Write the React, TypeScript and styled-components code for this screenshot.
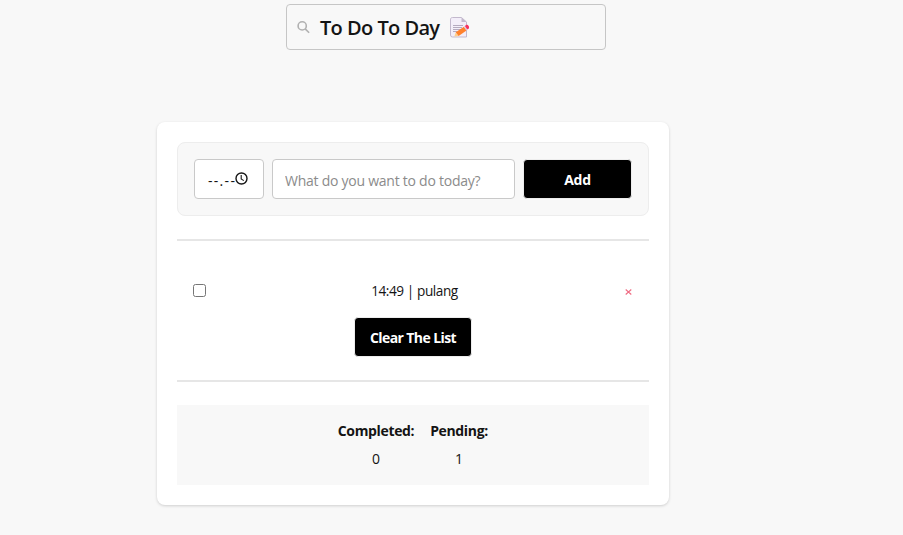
import React, { useState } from 'react';
import styled, { createGlobalStyle } from 'styled-components';

const GlobalStyle = createGlobalStyle`
  * { box-sizing: border-box; }
  body {
    margin: 0;
    background: #f8f8f8;
    color: #141414;
    font-family: "Open Sans", "Noto Sans", sans-serif;
    font-size: 14px;
    line-height: 20px;
    overflow: hidden;
  }
  button, input { font: inherit; }
`;

const Page = styled.main`
  height: 535px;
  padding-top: 4px;
`;

const Header = styled.header`
  display: flex;
  align-items: center;
  width: 320px;
  height: 46px;
  margin-left: 286px;
  padding-left: 10px;
  border: 1px solid #c6c6c6;
  border-radius: 4px;
`;

const Title = styled.h1`
  margin: 1px 0 0 10px;
  width: 130px;
  font-size: 20px;
  font-weight: 600;
  line-height: 28px;
  letter-spacing: -0.75px;
  word-spacing: 0.6px;
  white-space: nowrap;
`;

const Card = styled.section`
  width: 512px;
  height: 383px;
  margin: 72px 0 0 157px;
  padding: 20px;
  border-radius: 8px;
  background: #fff;
  box-shadow: 0 1px 3px rgba(0, 0, 0, 0.17);
`;

const Form = styled.form`
  display: flex;
  gap: 8px;
  height: 74px;
  padding: 16px;
  border: 1px solid #ededed;
  border-radius: 8px;
  background: #f8f8f8;
`;

const TimeField = styled.div`
  display: flex;
  align-items: center;
  width: 70px;
  height: 40px;
  padding: 2px 0 0 13px;
  border: 1px solid #c9c9c9;
  border-radius: 4px;
  background: #fff;
  letter-spacing: 1.3px;
  svg { margin: -3px 0 0; flex: none; }
`;

const TimeText = styled.span`
  width: 27px;
  padding-top: 2px;
  white-space: nowrap;
`;

const TaskInput = styled.input`
  width: 243px;
  height: 40px;
  padding: 2px 12px 0;
  border: 1px solid #c9c9c9;
  border-radius: 4px;
  background: #fff;
  outline: none;
  letter-spacing: -0.25px;
  &::placeholder { color: #8b8b8b; opacity: 1; }
`;

const Button = styled.button<{ $width: number; $tracking?: number }>`
  width: ${({ $width }) => $width}px;
  height: 40px;
  padding: 2px 0 0;
  border: 1px solid #ededed;
  border-radius: 4px;
  background: #000;
  color: #fff;
  font-weight: 700;
  letter-spacing: ${({ $tracking = 0 }) => $tracking}px;
  white-space: nowrap;
`;

const Divider = styled.hr`
  height: 2px;
  margin: 23px 0;
  border: 0;
  background: #e6e6e6;
`;

const List = styled.div`
  display: flex;
  flex-direction: column;
  align-items: center;
  height: 81px;
  margin-top: 35px;
`;

const Task = styled.div`
  display: flex;
  align-items: center;
  width: 100%;
  height: 30px;
  padding: 0 17px 0 16px;
`;

const Checkbox = styled.input`
  width: 13px;
  height: 13px;
  margin: 0 0 2px;
`;

const TaskText = styled.span`
  flex: 1;
  padding-right: 2px;
  text-align: center;
  font-size: 13.6px;
  letter-spacing: -0.42px;
`;

const Remove = styled.button`
  display: flex;
  padding: 1px 0 0;
  border: 0;
  background: none;
`;

const ClearRow = styled.div`
  margin-top: 11px;
`;

const Stats = styled.div`
  display: flex;
  justify-content: center;
  gap: 16px;
  height: 80px;
  padding-top: 16px;
  background: #f8f8f8;
`;

const Stat = styled.div<{ $width: number }>`
  display: flex;
  flex-direction: column;
  align-items: center;
  gap: 8px;
  width: ${({ $width }) => $width}px;
  white-space: nowrap;
  strong { font-weight: 700; letter-spacing: -0.35px; }
`;

function SearchIcon() {
  return (
    <svg width="13" height="13" viewBox="0 0 13 13" fill="none" stroke="#b1b1b1" strokeWidth="1.6">
      <circle cx="5.2" cy="4.9" r="4.1" /><path d="m8.2 7.9 3.9 3.9" />
    </svg>
  );
}

function NoteIcon() {
  return (
    <svg width="21" height="21" viewBox="0 0 21 21">
      <path d="M2.5.5h9l5 4.5v15h-14a2 2 0 0 1-2-2v-15a2 2 0 0 1 2-2.5z" fill="#f3eef9" stroke="#c3b9cd" />
      <path d="M11.5.5V5h5z" fill="#c3b9cd" />
      <path d="M3 8.5h10M3 10.5h9M3 12.5h8M3 14.5h4" stroke="#b5abc0" strokeWidth="1" />
      <path d="m4.3 19.5 1.4-4 2.8 3.5z" fill="#ffd08b" />
      <path d="m5.7 15.2 8.2-5.5 2.6 3.9L8.6 19z" fill="#ff822d" />
      <path d="m13.9 9.7 1-.7 2.7 3.9-1.1.7z" fill="#d7c8dc" />
      <path d="m14.9 9 1.2-1c1.5-.9 3.8 1.9 2.7 3.3l-1.3 1.2z" fill="#f8315f" />
    </svg>
  );
}

function ClockIcon() {
  return (
    <svg width="13" height="13" viewBox="0 0 13 13" fill="none" stroke="#171717" strokeWidth="1.4">
      <circle cx="6.5" cy="6.5" r="5.5" /><path d="M6.2 3v4l2.6 1.6" strokeWidth="1.1" />
    </svg>
  );
}

export default function App() {
  const [task, setTask] = useState('');
  return (
    <>
      <GlobalStyle />
      <Page>
        <Header><SearchIcon /><Title>To Do To Day</Title><NoteIcon /></Header>
        <Card>
          <Form onSubmit={(event) => event.preventDefault()}>
            <TimeField><TimeText>--.--</TimeText><ClockIcon /></TimeField>
            <TaskInput value={task} onChange={(event) => setTask(event.target.value)} placeholder="What do you want to do today?" />
            <Button $width={109} $tracking={-0.3}>Add</Button>
          </Form>
          <Divider />
          <List>
            <Task>
              <Checkbox type="checkbox" aria-label="pulang" />
              <TaskText>14:49 | pulang</TaskText>
              <Remove aria-label="Remove">
                <svg width="7" height="6" viewBox="0 0 7 6" stroke="#ef6c83" strokeWidth="1.1"><path d="m.7.5 5.6 5M6.3.5l-5.6 5" /></svg>
              </Remove>
            </Task>
            <ClearRow><Button $width={118} $tracking={-0.6}>Clear The List</Button></ClearRow>
          </List>
          <Divider />
          <Stats>
            <Stat $width={76}><strong>Completed:</strong><span>0</span></Stat>
            <Stat $width={58}><strong>Pending:</strong><span>1</span></Stat>
          </Stats>
        </Card>
      </Page>
    </>
  );
}
